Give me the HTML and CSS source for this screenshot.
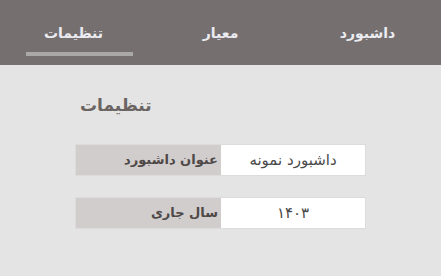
FILE: index.html
```html
<!DOCTYPE html>
<html lang="fa">
<head>
    <meta charset="UTF-8">
    <meta name="viewport" content="width=device-width, initial-scale=1.0">
    <title>تنظیمات</title>
    <link rel="stylesheet" href="styles.css">
</head>
<body>
    <nav class="tabs">
        <div class="tab">داشبورد</div>
        <div class="tab">معیار</div>
        <div class="tab active">تنظیمات<span class="bar"></span></div>
    </nav>

    <div class="content">
        <h2>تنظیمات</h2>
        <div class="field">
            <div class="label">عنوان داشبورد</div>
            <div class="value">داشبورد نمونه</div>
        </div>
        <div class="field">
            <div class="label">سال جاری</div>
            <div class="value">۱۴۰۳</div>
        </div>
    </div>
</body>
</html>
```

FILE: styles.css
```css
body {
    margin: 0;
    background-color: #e4e4e4;
    font-family: "DejaVu Sans", Tahoma, sans-serif;
}
.tabs {
    display: flex;
    direction: rtl;
    height: 65px;
    background-color: #75706f;
}
.tab {
    flex: 1;
    display: flex;
    flex-direction: column;
    align-items: center;
    padding-top: 22px;
    line-height: 22px;
    font-size: 14px;
    font-weight: bold;
    color: #ebebf2;
}
.bar {
    align-self: stretch;
    height: 4px;
    margin: 8px 14px 0 26px;
    background-color: #aaa9a8;
}
.content {
    padding: 26px 75px 0;
}
h2 {
    margin: 0 0 25px 5px;
    font-size: 17px;
    line-height: 28px;
    color: #6a6462;
}
.field {
    display: flex;
    height: 30px;
    border: 1px solid #dcdcdc;
    margin-bottom: 21px;
    font-size: 13px;
    line-height: 30px;
}
.label {
    width: 142px;
    padding-right: 3px;
    background-color: #d1cdcd;
    text-align: right;
    font-weight: bold;
    color: #4e4846;
    direction: rtl;
}
.value {
    flex: 1;
    background-color: #fff;
    text-align: center;
    font-size: 15px;
    color: #4a4a4a;
    direction: rtl;
}
```
